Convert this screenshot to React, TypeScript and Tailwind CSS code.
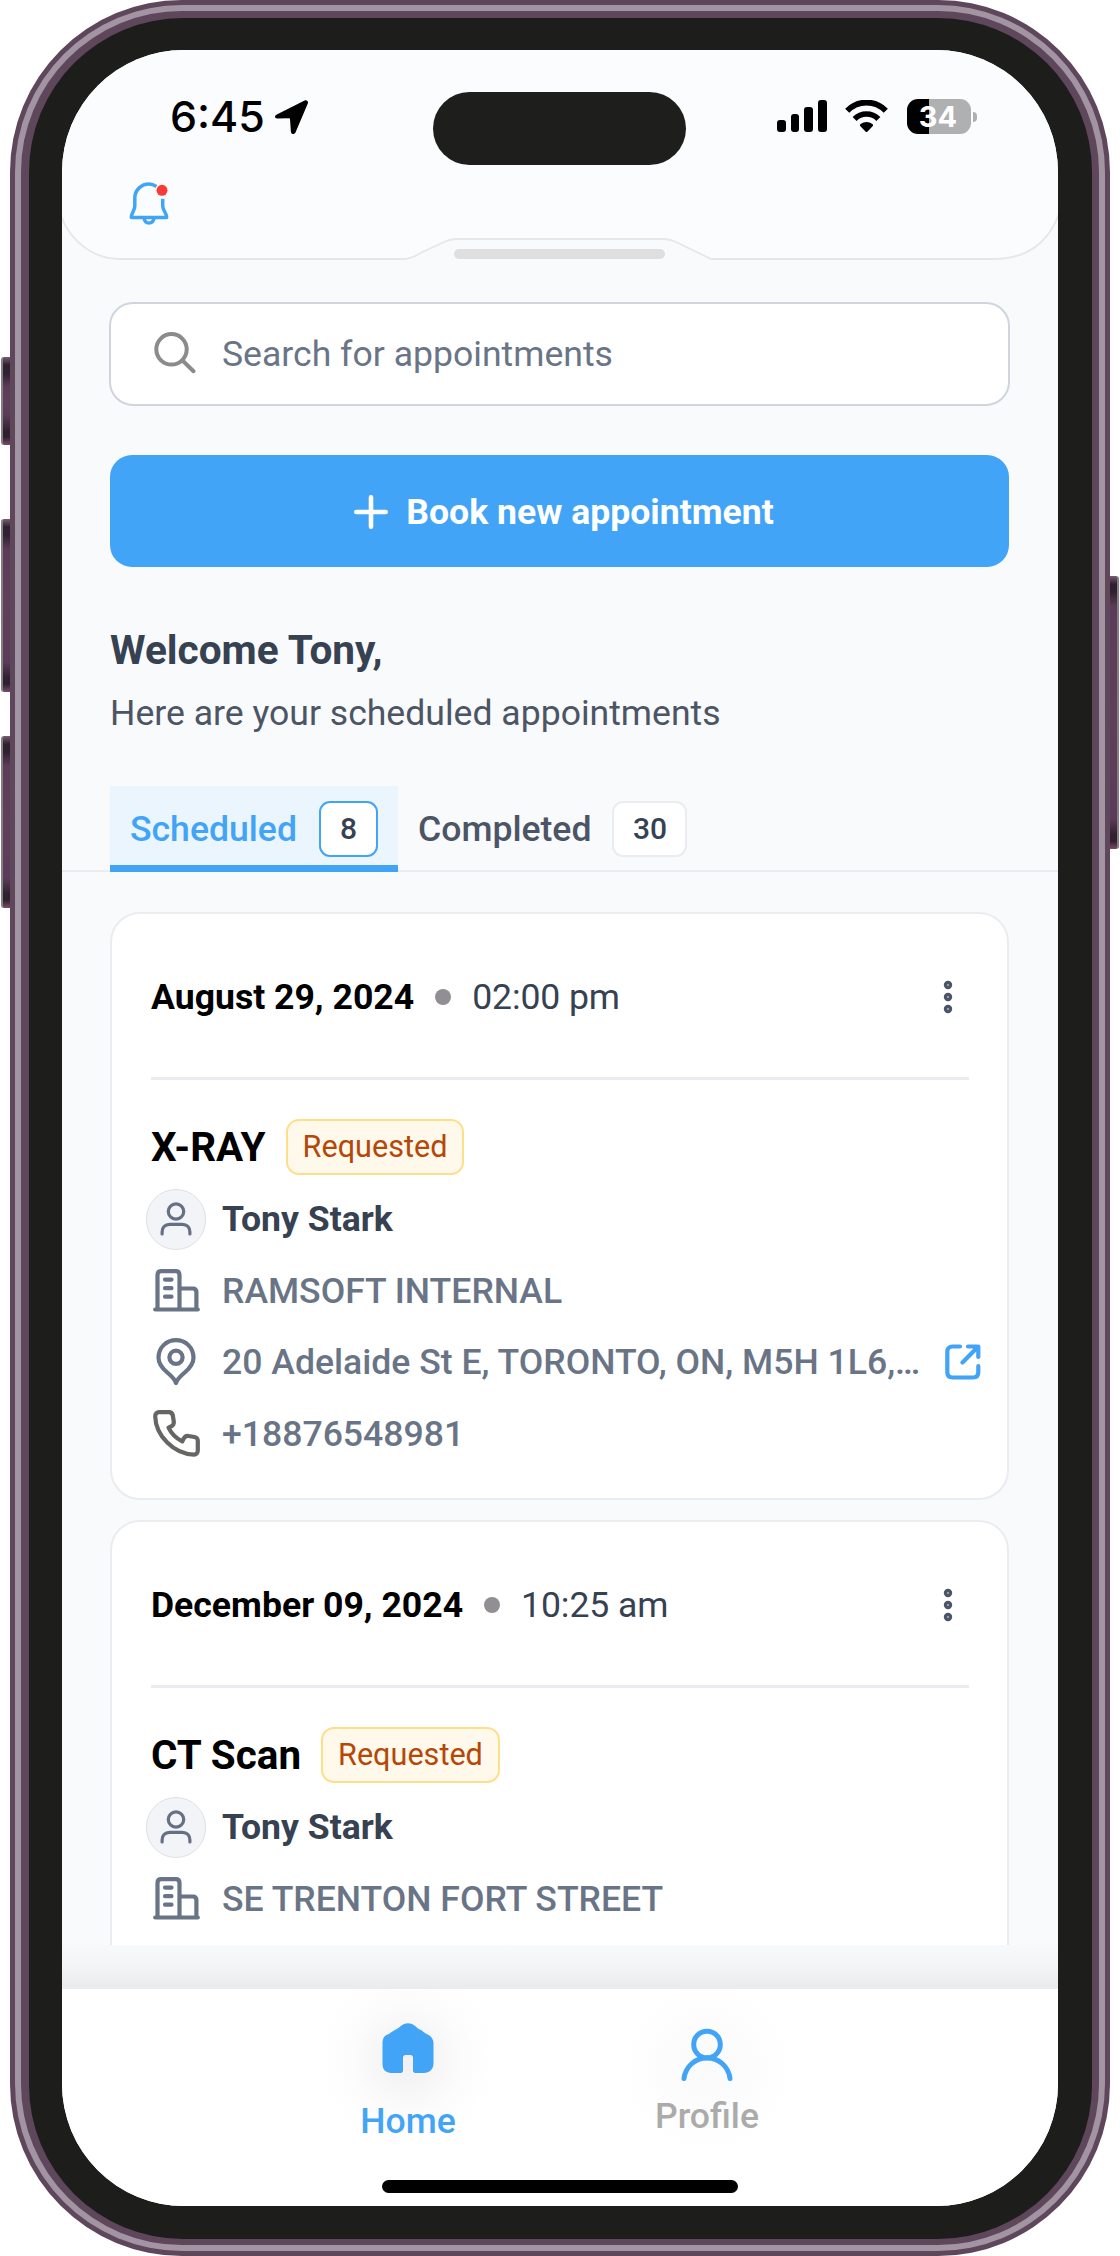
import React from "react";

const BLUE = "#42a4f7";
const SLATE = "#667085";

function LocationArrow() {
  return (
    <svg className="h-[34px] w-[33px]" viewBox="0 0 33 34" aria-hidden="true">
      <path d="M1.8 14.6 29.6.5c2-1 4 .7 3.200 2.900L20.600 32.200c-1 2.600-4.400 2.300-4.700-.5L15 19.200a1 1 0 0 0-1-1L2.300 18.500C-.4 18.300-.8 15.900 1.800 14.600Z" fill="#000" />
    </svg>
  );
}

function WifiIcon() {
  return (
    <svg className="h-[33px] w-[43px]" viewBox="0 0 43 33" aria-hidden="true">
      <path d="M2.200 10.700C13-.2 30-.2 40.800 10.700" fill="none" stroke="#000" strokeWidth="5.800" />
      <path d="M9.600 19C16.200 12.300 26.800 12.300 33.400 19" fill="none" stroke="#000" strokeWidth="5.600" />
      <path d="M15.400 26.300c-.7-.7-.6-1.700.2-2.300 3.600-2.700 8.200-2.700 11.800 0 .8.600.9 1.600.2 2.300l-5.300 5.400c-.5.500-1.100.5-1.600 0Z" fill="#000" />
    </svg>
  );
}

function BellIcon() {
  return (
    <svg className="h-[44px] w-[40px]" viewBox="0 0 40 44" aria-hidden="true">
      <g fill="none" stroke={BLUE} strokeWidth="3.500" strokeLinecap="round" strokeLinejoin="round">
        <path d="M27.500 5.400C25.500 4.200 22.800 3 20 3c-7.300 0-14.200 5.600-14.200 14.200V25c0 4.500-3.500 7-3.500 11.500h35.400c0-4.500-4-7-4-11.500v-7.300" strokeLinecap="butt" />
        <path d="M15 37.500c.6 2.800 2.600 4.500 5 4.500s4.400-1.700 5-4.500" />
      </g>
      <circle cx="33" cy="9.300" r="5.500" fill="#f93a37" />
    </svg>
  );
}

function SearchIcon() {
  return (
    <svg className="-mt-[2px] h-[42px] w-[42px]" viewBox="0 0 42 42" fill="none" stroke="#8c8b8b" strokeWidth="4" strokeLinecap="round" aria-hidden="true">
      <circle cx="17.500" cy="17.300" r="15.200" />
      <path d="m28.500 28.500 11 10.700" />
    </svg>
  );
}

function AvatarIcon() {
  return (
    <span className="flex h-[61px] w-[61px] items-center justify-center rounded-full border border-[#dfe0e3] bg-[#f2f4f8]">
      <svg className="h-[36px] w-[34px]" viewBox="0 0 34 36" fill="none" stroke={SLATE} strokeWidth="3.200" strokeLinecap="round" aria-hidden="true">
        <circle cx="17" cy="10.500" r="7.700" />
        <path d="M3.100 33v-2c0-4.600 3-7.600 7.600-7.600h12.600c4.600 0 7.600 3 7.600 7.600v2" />
      </svg>
    </span>
  );
}

function BuildingIcon() {
  return (
    <svg className="h-[43px] w-[47px]" viewBox="0 0 47 43" fill="none" stroke="#697586" strokeWidth="4.200" strokeLinecap="round" strokeLinejoin="round" aria-hidden="true">
      <path d="M2.200 40.500h42.600" />
      <path d="M4.500 40V6c0-2.500 1.300-3.800 3.600-3.800h14.800c2.300 0 3.600 1.300 3.600 3.800V40" />
      <path d="M27 19.500h12.800c2.300 0 3.600 1.300 3.600 3.600V40" />
      <path d="M12 10.600h6.500M12 19.200h6.500M12 27.700h6.500" />
    </svg>
  );
}

function PinIcon() {
  return (
    <svg className="h-[48px] w-[40px]" viewBox="0 0 40 48" fill="none" stroke="#697586" strokeWidth="4.200" strokeLinejoin="round" aria-hidden="true">
      <path d="M20 45c-1.500-4.500-5-7.200-8.700-10.500C6 30 2.500 26 2.500 19.700 2.500 9.500 10.300 2.200 20 2.200s17.500 7.300 17.500 17.500c0 6.300-3.500 10.300-8.800 14.800C25 37.800 21.500 40.500 20 45Z" />
      <circle cx="20" cy="19.300" r="6.600" />
    </svg>
  );
}

function PhoneIcon() {
  return (
    <svg className="h-[47px] w-[47px]" viewBox="0 0 47 47" fill="none" stroke="#666664" strokeWidth="4.200" strokeLinejoin="round" strokeLinecap="round" aria-hidden="true">
      <path d="M2.200 6.200c0-2.500 1.500-4 4-4h9.600c2.200 0 3.600 1.100 4 3.300l1 6.200c.4 2.500-.6 3.700-2.600 4.700l-2.700 1.300c3 6.200 7.500 10.700 13.700 13.700l1.500-2.800c1-2 2.300-3 4.800-2.600l6 1c2.200.4 3.300 1.800 3.300 4v9.600c0 2.500-1.600 4.100-4 4C21 44 2.600 25.800 2.200 6.200Z" />
    </svg>
  );
}

function ExternalIcon() {
  return (
    <svg className="h-[36px] w-[36px]" viewBox="0 0 36 36" fill="none" stroke={BLUE} strokeWidth="4.200" strokeLinecap="round" strokeLinejoin="round" aria-hidden="true">
      <path d="M15 2.500H7.500c-3.300 0-5.200 1.900-5.200 5.200v20.600c0 3.300 1.900 5.200 5.200 5.200h20.600c3.300 0 5.200-1.900 5.200-5.200V22" />
      <path d="M23 2.500h10.300V13M33 2.800 17.500 18.500" />
    </svg>
  );
}

function KebabIcon() {
  return (
    <svg className="h-[34px] w-[10px]" viewBox="0 0 10 34" fill="none" stroke="#4b5565" strokeWidth="3.400" aria-hidden="true">
      <circle cx="5" cy="5" r="2.500" />
      <circle cx="5" cy="17" r="2.500" />
      <circle cx="5" cy="29" r="2.500" />
    </svg>
  );
}

function Row({ icon, children }: { icon: React.ReactNode; children: React.ReactNode }) {
  return (
    <div className="-ml-[5px] flex h-[71.5px] items-center">
      <span className="flex w-[60px] shrink-0 justify-center">{icon}</span>
      <div className="ml-[16px] flex items-center whitespace-nowrap text-[35.6px] leading-[44px]">{children}</div>
    </div>
  );
}

type Appointment = {
  date: string;
  time: string;
  exam: string;
  patient: string;
  site: string;
  address: string;
  phone: string;
};

const appointments: Appointment[] = [
  { date: "August 29, 2024", time: "02:00 pm", exam: "X-RAY", patient: "Tony Stark", site: "RAMSOFT INTERNAL", address: "20 Adelaide St E, TORONTO, ON, M5H 1L6,…", phone: "+18876548981" },
  { date: "December 09, 2024", time: "10:25 am", exam: "CT Scan", patient: "Tony Stark", site: "SE TRENTON FORT STREET", address: "", phone: "" },
];

function AppointmentCard({ a }: { a: Appointment }) {
  return (
    <article className="h-[588px] shrink-0 rounded-[30px] border-2 border-[#eaecf0] bg-white pr-[38px] pl-[39px]">
      <header className="flex h-[163px] items-center pt-[3px] text-[35.6px] leading-[44px]">
        <span className="font-bold text-black">{a.date}</span>
        <span className="mx-[21px] h-4 w-4 rounded-full bg-[#918f94]" />
        <span className="tracking-[-0.1px] text-[#364152]">{a.time}</span>
        <span className="mr-[16px] ml-auto">
          <KebabIcon />
        </span>
      </header>
      <div className="h-[3px] bg-[#ebecf1]" />
      <div className="pt-[32px]">
        <div className="flex h-[71.5px] items-center">
          <h3 className="text-[40.4px] leading-[48px] font-bold text-black">{a.exam}</h3>
          <span className="-mt-px ml-[20px] flex h-[56px] items-center rounded-[13px] border-[2.5px] border-[#fedf89] bg-[#fff9eb] px-[15px] text-[30.6px] leading-[36px] text-[#b54708]">
            Requested
          </span>
        </div>
        <Row icon={<AvatarIcon />}>
          <span className="font-bold text-[#364152]">{a.patient}</span>
        </Row>
        <Row icon={<BuildingIcon />}>
          <span className="font-medium text-[#697586]">{a.site}</span>
        </Row>
        {a.address && (
          <Row icon={<PinIcon />}>
            <span className="w-[723px] font-medium text-[#697586]">{a.address}</span>
            <ExternalIcon />
          </Row>
        )}
        {a.phone && (
          <Row icon={<PhoneIcon />}>
            <span className="font-medium text-[#697586]">{a.phone}</span>
          </Row>
        )}
      </div>
    </article>
  );
}

function StatusBar() {
  return (
    <div className="flex">
      <div className="flex w-[371px] items-start pt-[42px] pl-[108px]">
        <span className="w-[95px] font-[Inter] text-[43px] leading-[49px] font-[550] text-black">6:45</span>
        <span className="mt-[8px] ml-[10px]">
          <LocationArrow />
        </span>
      </div>
      <div className="mt-[42px] h-[73px] w-[253px] rounded-full bg-[#1e1e1c]" />
      <div className="flex items-start pl-[91px]">
        <div className="mt-[50px] flex h-[32px] w-[50px] items-end justify-between">
          <span className="h-[12px] w-[9px] rounded-[3px] bg-black" />
          <span className="h-[18px] w-[8px] rounded-[3px] bg-black" />
          <span className="h-[25px] w-[9px] rounded-[3px] bg-black" />
          <span className="h-[32px] w-[9px] rounded-[3px] bg-black" />
        </div>
        <span className="mt-[50px] ml-[18px]">
          <WifiIcon />
        </span>
        <div className="mt-[49px] ml-[19px] flex items-center gap-[2px]">
          <div className="flex h-[35px] w-[64px] items-center justify-center rounded-[11px] bg-[linear-gradient(90deg,#000_22px,#aeb0b1_22px)] pr-[2px] font-[Inter] text-[29px] leading-none font-bold text-white">
            34
          </div>
          <span className="h-[10px] w-[4px] rounded-r-full bg-[#aeb0b1]" />
        </div>
      </div>
    </div>
  );
}

function Header() {
  return (
    <div className="relative h-[209px] shrink-0">
      <svg className="absolute inset-0 h-[211px] w-[996px]" viewBox="0 0 996 211" aria-hidden="true">
        <path d="M-1 166C8 190 30 209 58 209H343C351 209 357 203 365 200L382 192C386 190 389 189 394 189H602C607 189 610 190 614 192L649 209H932C962 209 986 195 997 164V-2H-1Z" fill="#fbfcfd" stroke="#e6e7e8" strokeWidth="1.800" />
      </svg>
      <div className="relative">
        <StatusBar />
        <div className="flex items-end">
          <span className="mt-[16px] ml-[67px]">
            <BellIcon />
          </span>
        </div>
        <div className="mt-[24px] ml-[392px] h-[10px] w-[211px] rounded-full bg-[#dfdfdf]" />
      </div>
    </div>
  );
}

function Tabs() {
  return (
    <div className="mt-[49px] flex h-[86px] border-b-2 border-[#eaecf0] pl-[48px] text-[35.6px] leading-[44px] font-medium">
      <button className="flex h-[86px] w-[288px] items-center justify-between border-b-[7px] border-[#42a4f7] bg-[#eaf5fe] pt-[7px] pr-[20px] pl-[20px] text-[#42a4f7]">
        Scheduled
        <span className="flex h-[56px] w-[59px] items-center justify-center rounded-[11px] border-[2.5px] border-[#42a4f7] bg-white text-[30px] text-[#364152]">8</span>
      </button>
      <button className="flex h-[86px] items-center pl-[20px] text-[#4b5565]">
        Completed
        <span className="ml-[21px] flex h-[56px] w-[75px] items-center justify-center rounded-[11px] border-[2.5px] border-[#eaecf0] bg-white text-[30px] text-[#364152]">30</span>
      </button>
    </div>
  );
}

function BottomNav() {
  return (
    <nav className="flex h-[217px] shrink-0 flex-col bg-white">
      <div className="flex h-[191px] text-[35.6px] leading-[44px] font-medium">
        <button className="ml-[236px] flex w-[220px] flex-col items-center bg-[radial-gradient(circle_at_110px_70px,#f0f0f0_0px,#f6f6f6_30px,#fcfcfc_56px,#ffffff_88px)] pt-[34px] text-[#42a4f7]">
          <svg className="h-[51px] w-[52px]" viewBox="0 0 52 51" fill={BLUE} aria-hidden="true">
            <path d="M19.500 2.500c4.200-3 8.800-3 13 0l3.500 2.900c1.500 1 3 1.200 4.500 2.700 1.800 2 4.500 2.600 6.600 4.200 2.700 2 4.400 4.500 4.400 8v20.200c0 5.800-4.200 9.500-9.500 9.500H33.500c-1.500 0-2.500-1-2.500-2.500V34.500c0-1.500-1-2.500-2.500-2.500h-5c-1.500 0-2.500 1-2.500 2.500v13c0 1.500-1 2.500-2.500 2.500H9.500C3.500 50 .5 46.500.5 41V20.500c0-4.500 1.500-8 6-9.200 3.500-3 6.500-4 9.500-6Z" />
          </svg>
          <span className="mt-[25px]">Home</span>
        </button>
        <button className="ml-[79px] flex w-[220px] flex-col items-center bg-[radial-gradient(circle_at_110px_80px,#fafafa_0px,#fcfcfc_40px,#ffffff_84px)] pt-[39px] text-[#ababab]">
          <svg className="h-[54px] w-[54px]" viewBox="0 0 54 54" fill="none" stroke={BLUE} strokeWidth="5" strokeLinecap="round" aria-hidden="true">
            <circle cx="27" cy="16.500" r="13.300" />
            <path d="M4 50.500C5.500 38.500 15 30 27 30s21.500 8.500 23 20.500" />
          </svg>
          <span className="mt-[12px]">Profile</span>
        </button>
      </div>
      <div className="mx-auto h-[13px] w-[356px] rounded-full bg-black" />
    </nav>
  );
}

function Screen() {
  return (
    <div className="flex h-[2156px] w-[996px] flex-col overflow-hidden rounded-[122px] bg-[#f9fafc] font-[Roboto]">
      <Header />
      <main className="flex h-[1686px] shrink-0 flex-col overflow-hidden">
        <div className="mr-[48px] ml-[47px] mt-[43px] flex h-[104px] shrink-0 items-center rounded-[24px] border-[2.5px] border-[#d0d5dd] bg-white pl-[43px]">
          <SearchIcon />
          <span className="ml-[26px] text-[35.6px] leading-[44px] text-[#697586]">Search for appointments</span>
        </div>
        <button className="mr-[49px] ml-[48px] mt-[49px] flex h-[112px] shrink-0 items-center justify-center rounded-[22px] bg-[#42a4f7] pt-[2px] pl-[9px] text-white">
          <svg className="h-[34px] w-[34px]" viewBox="0 0 34 34" stroke="#fff" strokeWidth="4.600" strokeLinecap="round" aria-hidden="true">
            <path d="M17 2.300v29.400M2.300 17h29.400" />
          </svg>
          <span className="ml-[18px] text-[35.6px] leading-[44px] font-bold">Book new appointment</span>
        </button>
        <h1 className="mt-[59px] ml-[48px] text-[40.6px] leading-[48px] font-bold text-[#364152]">Welcome Tony,</h1>
        <p className="mt-[15px] ml-[48px] text-[35.6px] leading-[48px] text-[#4b5565]">Here are your scheduled appointments</p>
        <Tabs />
        <div className="mr-[49px] ml-[48px] mt-[40px] flex flex-col gap-[20px]">
          {appointments.map((a) => (
            <AppointmentCard key={a.date} a={a} />
          ))}
        </div>
      </main>
      <div className="h-[44px] shrink-0 bg-[linear-gradient(180deg,#f8f9fb_0%,#f3f4f6_50%,#eaebed_100%)]" />
      <BottomNav />
    </div>
  );
}

function SideButton({ className }: { className: string }) {
  return (
    <div
      className={`${className} border-[#857d86] bg-[linear-gradient(180deg,#7a5a72_0px,#2e202e_8px,#2e202e_16px,#5c3b58_30px,#5f4058_50%,#5c3b58_calc(100%-30px),#2e202e_calc(100%-14px),#2e202e_calc(100%-8px),#7a4a6c_100%)]`}
    />
  );
}

export default function App() {
  return (
    <div className="flex h-[2256px] w-[1120px] bg-white">
      <div className="flex w-[10px] flex-col items-end pt-[357px]">
        <SideButton className="h-[88px] w-[9px] rounded-l-[3px] border-l-2" />
        <SideButton className="mt-[74px] h-[173px] w-[9px] rounded-l-[3px] border-l-2" />
        <SideButton className="mt-[44px] h-[172px] w-[9px] rounded-l-[3px] border-l-2" />
      </div>
      <div className="w-[1100px] rounded-[172px] bg-[#5e465b] p-[5px]">
        <div className="h-[2246px] rounded-[167px] bg-[#a394a3] p-[6px]">
          <div className="h-[2234px] rounded-[161px] bg-[#5e465b] px-[7.500px] py-[6.500px]">
            <div className="h-[2221px] rounded-[154px] bg-[#1d1d1b] px-[33.500px] py-[32.500px]">
              <Screen />
            </div>
          </div>
        </div>
      </div>
      <div className="w-[10px] pt-[576px]">
        <SideButton className="h-[273px] w-[9px] rounded-r-[3px] border-r-2" />
      </div>
    </div>
  );
}
